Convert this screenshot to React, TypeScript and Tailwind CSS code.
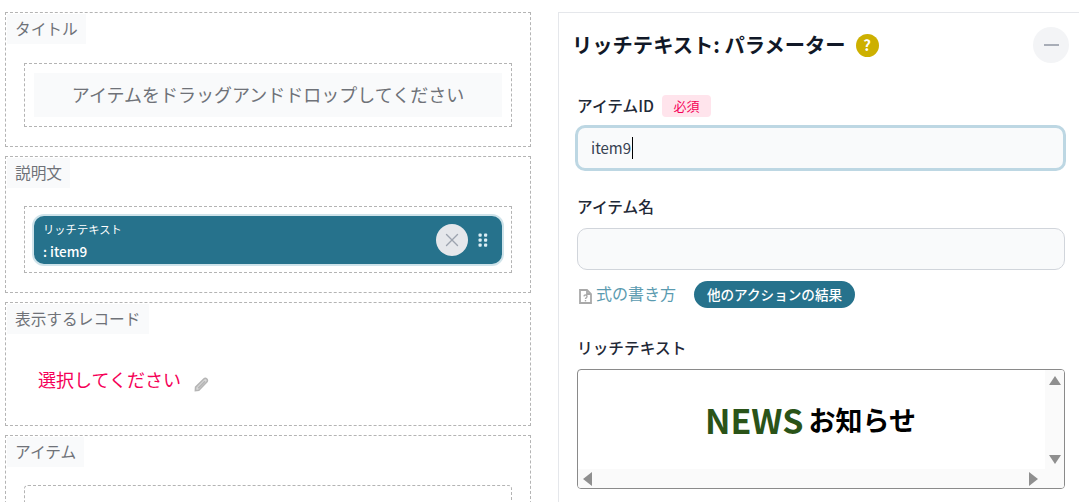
import React from 'react';
import { X } from 'lucide-react';

const FONT = "font-['Noto_Sans_CJK_JP','Noto_Sans',sans-serif]";

function Section({ label, className, children }: { label: string; className: string; children?: React.ReactNode }) {
    return (
        <section className={`flex shrink-0 flex-col border border-dashed border-[#b4b4b4] p-px ${className}`}>
            <div className="flex h-[30px] w-fit items-center bg-[#f9fafb] px-[8px] text-[15.7px] text-[#6f7278]">
                <span className="-mt-[1px]">{label}</span>
            </div>
            {children}
        </section>
    );
}

function DragDots() {
    return (
        <svg width="10" height="14" viewBox="0 0 10 14" fill="#dbeef5">
            <rect x="0.5" y="0.5" width="3.2" height="3.2" rx="1" />
            <rect x="6" y="0.5" width="3.2" height="3.2" rx="1" />
            <rect x="0.5" y="5.5" width="3.2" height="3.2" rx="1" />
            <rect x="6" y="5.5" width="3.2" height="3.2" rx="1" />
            <rect x="0.5" y="10.5" width="3.2" height="3.2" rx="1" />
            <rect x="6" y="10.5" width="3.2" height="3.2" rx="1" />
        </svg>
    );
}

function PencilIcon() {
    return (
        <svg width="15" height="15" viewBox="0 0 15 15" fill="none" stroke="#b5b5b5" strokeWidth="1.6">
            <path d="M1.4 13.6 1.6 10.2 9.8 2a2 2 0 0 1 3 3l-8 8.2Z" fill="#d8d8d8" />
            <path d="M4.2 11.2 11 4.2" />
        </svg>
    );
}

function FileHelpIcon() {
    return (
        <svg width="13" height="15" viewBox="0 0 13 15" fill="none" stroke="#a9a9a9" strokeWidth="1.8">
            <path d="M1 1h7l4 4v9H1Z" />
            <path d="M8 1v4h4" />
            <path d="M5 7.4a1.5 1.5 0 1 1 2.2 1.4c-.5.3-.7.6-.7 1.2" strokeWidth="1.4" />
            <path d="M6.5 11v1.4" strokeWidth="1.4" />
        </svg>
    );
}

function Triangle({ points }: { points: string }) {
    return (
        <svg width="14" height="14" viewBox="0 0 14 14" fill="#8f8f8f">
            <polygon points={points} />
        </svg>
    );
}

function LeftColumn() {
    return (
        <div className="ml-[5px] flex w-[526px] shrink-0 flex-col gap-[9px] pt-3">
            <Section label="タイトル" className="h-[135px]">
                <div className="mx-[17px] mt-[19px] flex h-[64px] items-center border border-dashed border-[#b4b4b4] p-[9px]">
                    <div className="flex h-[44px] w-full items-center justify-center bg-[#f9fafb] pb-[2px] text-[18px] text-[#6f7278]">
                        アイテムをドラッグアンドドロップしてください
                    </div>
                </div>
            </Section>
            <Section label="説明文" className="h-[137px]">
                <div className="mx-[17px] mt-[18px] flex h-[67px] items-center border border-dashed border-[#b4b4b4] px-[7px]">
                    <div className="flex h-[52px] w-full items-center rounded-[12px] border-2 border-[#cfe3ea] bg-[#26728c] pr-[14px] pl-[9px] text-white">
                        <div className="flex flex-1 flex-col pt-[3px]">
                            <span className="text-[11.3px] leading-[16px]">リッチテキスト</span>
                            <span className="mt-[4px] text-[13.5px] leading-[20px] font-medium">: item9</span>
                        </div>
                        <div className="mr-[10px] flex h-8 w-8 items-center justify-center rounded-full bg-[#e5e7eb]">
                            <X size={22} strokeWidth={1.5} className="text-[#9ca3af]" />
                        </div>
                        <DragDots />
                    </div>
                </div>
            </Section>
            <Section label="表示するレコード" className="h-[124px]">
                <div className="mt-[32px] ml-[31px] flex items-center">
                    <span className="text-[18px] leading-[26px] text-[#f50057]">選択してください</span>
                    <span className="mt-[10px] ml-[13px] flex">
                        <PencilIcon />
                    </span>
                </div>
            </Section>
            <Section label="アイテム" className="h-[120px]">
                <div className="mx-[17px] mt-[18px] h-[60px] rounded-[4px] border border-dashed border-[#b4b4b4]" />
            </Section>
        </div>
    );
}

function RightPanel() {
    return (
        <div className="mt-3 ml-[27px] flex flex-1 flex-col border-t border-l border-[#e5e7eb] pr-[14px] pl-[18px]">
            <div className="-ml-[5px] flex h-[64px] items-center">
                <h2 className="pb-[1px] text-[20.3px] font-bold text-[#111827]">リッチテキスト: パラメーター</h2>
                <div className="ml-[10px] flex h-[23px] w-[23px] items-center justify-center rounded-full bg-[#cdb000] text-[15px] font-bold text-white">
                    ?
                </div>
                <div className="mr-[-4px] ml-auto flex h-9 w-9 items-center justify-center rounded-full bg-[#f3f4f6]">
                    <div className="h-[2px] w-[15px] bg-[#a8adb7]" />
                </div>
            </div>

            <div className="mt-[17px] flex h-[24px] items-center">
                <span className="text-[15.7px] font-medium text-[#1f2937]">アイテムID</span>
                <span className="ml-[8px] flex h-[22px] w-[49px] items-center justify-center rounded-[4px] bg-[#ffe4ec] text-[13px] text-[#f50057]">
                    必須
                </span>
            </div>
            <div className="mt-[7px] -mr-[1px] -ml-[2px] flex h-[46px] items-center rounded-[10px] border-[3px] border-[#bdd7e3] bg-[#f9fafb] pl-[13px] text-[15px] text-[#374151]">
                item9
                <span className="ml-px h-[22px] w-px bg-black" />
            </div>

            <div className="mt-[24px] text-[15.7px] leading-[24px] font-medium text-[#1f2937]">アイテム名</div>
            <div className="mt-[9px] h-[42px] rounded-[10px] border border-[#d1d5db] bg-[#f9fafb]" />

            <div className="mt-[11px] flex h-[27px] items-center">
                <span className="mt-[3px] ml-[2px] flex">
                    <FileHelpIcon />
                </span>
                <span className="ml-[4px] pb-[3px] text-[16px] text-[#5b9bb0]">式の書き方</span>
                <span className="ml-[18px] flex h-[27px] w-[161px] items-center justify-center rounded-full bg-[#26728c] text-[13.6px] font-medium text-white">
                    他のアクションの結果
                </span>
            </div>

            <div className="mt-[28px] text-[15.7px] leading-[24px] font-medium text-[#1f2937]">リッチテキスト</div>
            <div className="mt-[9px] flex h-[120px] flex-col overflow-hidden rounded-[4px] border border-[#8a8a8a]">
                <div className="flex flex-1">
                    <div className="flex flex-1 items-center justify-center pr-[2px]">
                        <span className="text-[34px] leading-none font-bold text-[#2a5318]">NEWS</span>
                        <span className="ml-[5px] text-[27px] leading-none font-bold text-black">お知らせ</span>
                    </div>
                    <div className="flex w-[19px] flex-col items-center justify-between bg-[#fafafa] pt-[4px] pb-[2px]">
                        <Triangle points="7,2 13,11 1,11" />
                        <Triangle points="1,2 13,2 7,11" />
                    </div>
                </div>
                <div className="flex h-[19px] items-center justify-between bg-[#fafafa] pr-[24px] pl-[3px]">
                    <Triangle points="2,7 11,0 11,14" />
                    <Triangle points="3,0 12,7 3,14" />
                </div>
            </div>
        </div>
    );
}

export default function App() {
    return (
        <div className={`flex h-[502px] w-[1079px] overflow-hidden bg-white ${FONT}`}>
            <LeftColumn />
            <RightPanel />
        </div>
    );
}
